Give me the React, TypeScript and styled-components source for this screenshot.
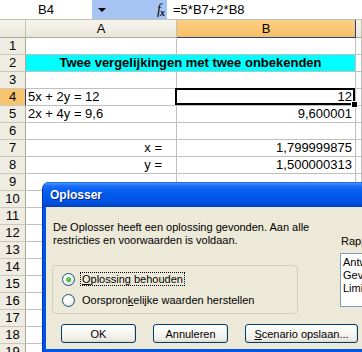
import React from 'react';
import styled, { createGlobalStyle } from 'styled-components';

const Global = createGlobalStyle`
  html, body { margin: 0; padding: 0; background: #fff; }
  body { width: 362px; height: 352px; overflow: hidden; }
`;

const Screen = styled.div`
  position: relative;
  width: 362px;
  height: 352px;
  overflow: hidden;
  background: #fff;
  font-family: "Liberation Sans", Arial, sans-serif;
  color: #000;
`;

/* ---------- formula bar ---------- */
const FormulaBar = styled.div`
  display: flex;
  height: 19px;
  border-bottom: 1px solid #c5c2b2;
  font-size: 13px;
`;

const NameBox = styled.div`
  width: 92px;
  display: flex;
  align-items: center;
  justify-content: center;
  background: #fff;
`;

const ToolZone = styled.div`
  width: 75px;
  display: flex;
  align-items: center;
  justify-content: space-between;
  padding: 0 3px 0 6px;
  box-sizing: border-box;
  background: #a6c3f3;
`;

const Arrow = styled.span`
  width: 0;
  height: 0;
  border-left: 4px solid transparent;
  border-right: 4px solid transparent;
  border-top: 4px solid #000;
  margin-top: 1px;
`;

const Fx = styled.span`
  font-family: "Liberation Serif", serif;
  font-style: italic;
  font-size: 14px;
  line-height: 1;
  letter-spacing: -1px;
`;

const FxSub = styled.span`
  font-size: 10px;
  font-weight: bold;
  position: relative;
  top: 2px;
`;

const FormulaText = styled.div`
  flex: 1;
  display: flex;
  align-items: center;
  padding-left: 6px;
  background: #fff;
`;

/* ---------- sheet ---------- */
const Sheet = styled.div`
  display: grid;
  grid-template-columns: 26px 151px 179px 1fr;
  grid-template-rows: 18px;
  grid-auto-rows: 17px;
  font-size: 13px;
  line-height: 16px;
`;

const ColHead = styled.div<{ $active?: boolean }>`
  box-sizing: border-box;
  background: ${p => (p.$active ? 'linear-gradient(#fbcf86, #f8bf63)' : 'linear-gradient(#f6f5ee, #e9e6da)')};
  border-right: 1px solid ${p => (p.$active ? '#2a3f8c' : '#c5c2b2')};
  border-bottom: 1px solid ${p => (p.$active ? '#2a3f8c' : '#aca899')};
  text-align: center;
  line-height: 17px;
`;

const RowHead = styled.div<{ $active?: boolean }>`
  box-sizing: border-box;
  background: ${p => (p.$active ? '#f9c46f' : '#efede3')};
  border-right: 1px solid ${p => (p.$active ? '#2a3f8c' : '#aca899')};
  border-bottom: 1px solid #cbc8ba;
  text-align: center;
`;

const Cell = styled.div<{ $align?: 'left' | 'right' | 'center'; $indent?: number; $selected?: boolean }>`
  position: relative;
  box-sizing: border-box;
  border-right: 1px solid #c0c0c0;
  border-bottom: 1px solid #c0c0c0;
  padding: 0 ${p => 3 + (p.$indent ?? 0)}px 0 2px;
  text-align: ${p => p.$align ?? 'left'};
  white-space: nowrap;

  ${p =>
    p.$selected &&
    `
    &::after {
      content: '';
      position: absolute;
      left: -2px; top: -1px; right: 0; bottom: 0;
      border: 2px solid #000;
      pointer-events: none;
    }
    &::before {
      content: '';
      position: absolute;
      right: -3px; bottom: -3px;
      width: 5px; height: 5px;
      background: #000;
      border: 1px solid #fff;
      z-index: 2;
    }
  `}
`;

const TitleCell = styled.div`
  grid-column: span 2;
  box-sizing: border-box;
  background: #00ffff;
  border-bottom: 1px solid #c0c0c0;
  border-right: 1px solid #c0c0c0;
  text-align: center;
  font-weight: bold;
`;

/* ---------- dialog ---------- */
const Dialog = styled.div`
  position: absolute;
  left: 42px;
  top: 182px;
  width: 340px;
  height: 170px;
  display: flex;
  flex-direction: column;
  border-radius: 7px 7px 0 0;
  background: #0055e5;
  border-left: 1px solid #0031c2;
  box-sizing: border-box;
  overflow: hidden;
  font-family: "Liberation Sans", Tahoma, sans-serif;
  font-size: 11px;
`;

const TitleBar = styled.div`
  height: 25px;
  flex: none;
  display: flex;
  align-items: center;
  padding: 1px 0 0 7px;
  box-sizing: border-box;
  background: linear-gradient(
    to bottom,
    #0a5ee8 0%,
    #3d8fff 6%,
    #1b6ef5 16%,
    #0660f0 35%,
    #0057ea 55%,
    #0053e3 78%,
    #0049d4 92%,
    #003dbb 100%
  );
  color: #fff;
  font-weight: bold;
  font-size: 12px;
  text-shadow: 1px 1px 0 #0b2a8a;
`;

const Body = styled.div`
  flex: 1;
  margin: 0 0 3px 3px;
  background: #ece9d8;
  padding: 14px 0 0 6px;
  display: grid;
  grid-template-columns: 288px 1fr;
  align-content: start;
  line-height: 13px;
`;

const Message = styled.p`
  grid-column: 1;
  grid-row: 1;
  margin: 0;
  padding-left: 1px;
`;

const ReportPanel = styled.div`
  grid-column: 2;
  grid-row: 1 / span 2;
  padding: 14px 0 0 0;
  white-space: nowrap;
`;

const ReportLabel = styled.div`
  padding-left: 1px;
`;

const ListBox = styled.div`
  margin-top: 5px;
  height: 54px;
  box-sizing: border-box;
  border: 1px solid #7f9db9;
  background: #fff;
  padding: 2px 0 0 2px;
`;

const GroupBox = styled.div`
  grid-column: 1;
  grid-row: 2;
  margin-top: 18px;
  width: 246px;
  height: 49px;
  box-sizing: border-box;
  border: 1px solid #d0d0bf;
  border-radius: 4px;
  padding: 6px 0 0 9px;
  display: flex;
  flex-direction: column;
  gap: 7px;
`;

const RadioRow = styled.div`
  display: flex;
  align-items: center;
  height: 14px;
  white-space: nowrap;
`;

const RadioCircle = styled.span<{ $checked?: boolean }>`
  position: relative;
  width: 13px;
  height: 13px;
  box-sizing: border-box;
  border-radius: 50%;
  border: 1px solid #1c5180;
  background: radial-gradient(circle at 35% 35%, #ffffff 30%, #e4e3dc 75%, #d3d1c6 100%);
  flex: none;

  ${p =>
    p.$checked &&
    `
    &::after {
      content: '';
      position: absolute;
      left: 3px; top: 3px;
      width: 5px; height: 5px;
      border-radius: 50%;
      background: radial-gradient(circle at 40% 40%, #7be27b, #21a121 80%);
    }
  `}
`;

const RadioLabel = styled.span<{ $focused?: boolean }>`
  margin-left: 5px;
  padding: 0 1px;
  line-height: 12px;
  border: 1px ${p => (p.$focused ? 'dotted #000' : 'solid transparent')};
`;

const Key = styled.span`
  text-decoration: underline;
`;

const ButtonRow = styled.div`
  grid-column: 1 / -1;
  grid-row: 3;
  margin-top: 10px;
  padding-left: 9px;
  display: flex;
  gap: 17px;
`;

const Button = styled.button<{ $w: number }>`
  width: ${p => p.$w}px;
  height: 19px;
  padding: 0;
  box-sizing: border-box;
  border: 1px solid #003c74;
  border-radius: 3px;
  background: linear-gradient(#ffffff 0%, #f6f6f2 45%, #ecebe4 85%, #d8d4c8 100%);
  box-shadow: inset -1px -1px 0 #e0dcd0;
  font-family: "Liberation Sans", Tahoma, sans-serif;
  font-size: 11px;
  color: #000;
  white-space: nowrap;
`;

type RowData = {
  a?: string;
  aAlign?: 'left' | 'right';
  b?: string;
  title?: string;
  selected?: boolean;
};

const rows: RowData[] = [
  {},
  { title: 'Twee vergelijkingen met twee onbekenden' },
  {},
  { a: '5x + 2y = 12', b: '12', selected: true },
  { a: '2x + 4y = 9,6', b: '9,600001' },
  {},
  { a: 'x =', aAlign: 'right', b: '1,799999875' },
  { a: 'y =', aAlign: 'right', b: '1,500000313' },
  {}, {}, {}, {}, {}, {}, {}, {}, {}, {}, {},
];

export default function App() {
  return (
    <Screen>
      <Global />
      <FormulaBar>
        <NameBox>B4</NameBox>
        <ToolZone>
          <Arrow />
          <Fx>
            f<FxSub>x</FxSub>
          </Fx>
        </ToolZone>
        <FormulaText>=5*B7+2*B8</FormulaText>
      </FormulaBar>

      <Sheet>
        <ColHead />
        <ColHead>A</ColHead>
        <ColHead $active>B</ColHead>
        <ColHead />
        {rows.map((r, i) => (
          <React.Fragment key={i}>
            <RowHead $active={r.selected}>{i + 1}</RowHead>
            {r.title ? (
              <TitleCell>{r.title}</TitleCell>
            ) : (
              <>
                <Cell $align={r.aAlign} $indent={r.aAlign === 'right' ? 11 : 0}>
                  {r.a}
                </Cell>
                <Cell $align="right" $selected={r.selected}>
                  {r.b}
                </Cell>
              </>
            )}
            <Cell />
          </React.Fragment>
        ))}
      </Sheet>

      <Dialog>
        <TitleBar>Oplosser</TitleBar>
        <Body>
          <Message>
            De Oplosser heeft een oplossing gevonden. Aan alle restricties en voorwaarden is voldaan.
          </Message>
          <ReportPanel>
            <ReportLabel>Rapporten</ReportLabel>
            <ListBox>
              <div>Antwoord</div>
              <div>Gevoeligheid</div>
              <div>Limieten</div>
            </ListBox>
          </ReportPanel>
          <GroupBox>
            <RadioRow>
              <RadioCircle $checked />
              <RadioLabel $focused>
                <Key>O</Key>plossing behouden
              </RadioLabel>
            </RadioRow>
            <RadioRow>
              <RadioCircle />
              <RadioLabel>
                Oorspron<Key>k</Key>elijke waarden herstellen
              </RadioLabel>
            </RadioRow>
          </GroupBox>
          <ButtonRow>
            <Button $w={75}>OK</Button>
            <Button $w={75}>Annuleren</Button>
            <Button $w={113}>
              <Key>S</Key>cenario opslaan...
            </Button>
          </ButtonRow>
        </Body>
      </Dialog>
    </Screen>
  );
}
